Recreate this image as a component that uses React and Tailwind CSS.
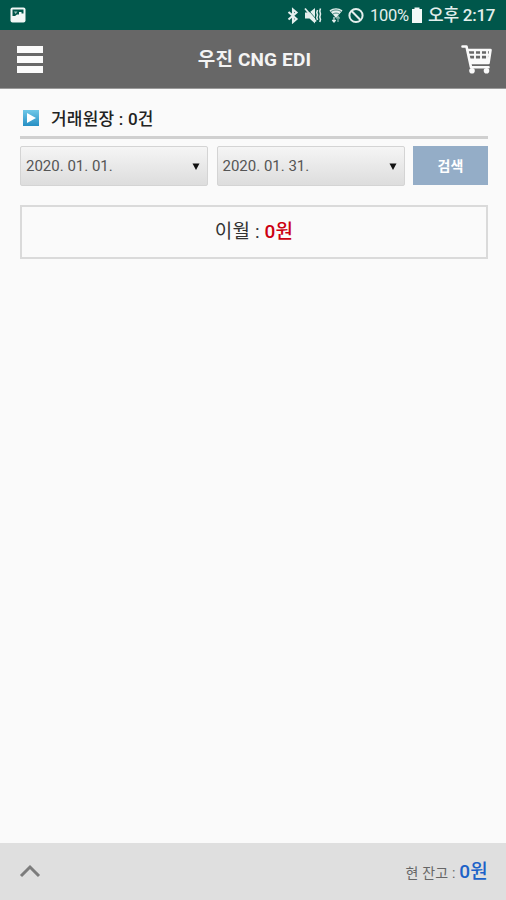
import React, { useState } from "react";

const StatusBar = () => {
  return (
    <div className="h-[30px] shrink-0 bg-[#00574b] flex items-center justify-between pl-[10px] pr-[10px] text-[#e4efed]">
      <svg className="w-4 h-4" viewBox="0 0 16 16">
        <rect x="0.5" y="0.5" width="15" height="15" rx="2" fill="#f2f8f7" />
        <path d="M2.500 2.500h11v4h-2V5H9v2.500H7L5 9H2.500z" fill="#00574b" />
        <path d="M4 4.500h3.500L5.500 7z" fill="#9cc2bb" />
      </svg>

      <div className="flex items-center">
        {/* bluetooth */}
        <svg className="w-3 h-[18px] mr-[5px]" viewBox="0 0 12 18">
          <path
            d="M1.500 6l8 7L6 16V3.500l3.500 3-8 7"
            fill="none"
            stroke="currentColor"
            strokeWidth="2.100"
          />
        </svg>
        {/* mute and vibrate */}
        <svg className="w-[18px] h-[18px] mr-[7px]" viewBox="0 0 18 18">
          <path d="M1 6.500h4.500l5.500-4.500v15.500L5.500 12.500H1z" fill="currentColor" />
          <path d="M3 2.500l9 10.500" stroke="#00574b" strokeWidth="0.800" />
          <path d="M1 2.500l11 13" stroke="currentColor" strokeWidth="1.800" />
          <path
            d="M13.500 4l-0.700 2.500 0.700 2.500-0.700 2.500 0.700 2.500M16.500 2.500l-0.700 2.500 0.700 3-0.700 3 0.700 2.500-0.700 2.500"
            fill="none"
            stroke="currentColor"
            strokeWidth="1.500"
          />
        </svg>
        {/* wifi */}
        <svg className="w-[14px] h-[18px] mr-[5px]" viewBox="0 0 14 18">
          <path d="M0.500 4.500C4.500 1.500 9.500 1.500 13.500 4.500L7 12z" fill="currentColor" />
          <path
            d="M2 5.500c3.300-2 6.700-2 10 0M4 8c2-1.300 4-1.300 6 0"
            fill="none"
            stroke="#00574b"
            strokeWidth="0.700"
          />
          <path
            d="M5 11v4.500M3.300 14l1.700 2 1.700-2"
            fill="none"
            stroke="currentColor"
            strokeWidth="1.200"
          />
          <path
            d="M9 16V11M7.300 12.500l1.700-2 1.700 2"
            fill="none"
            stroke="#8ab5ad"
            strokeWidth="1.200"
          />
        </svg>
        <svg className="w-4 h-[18px] mr-[6px]" viewBox="0 0 16 18">
          <circle
            cx="8"
            cy="9.500"
            r="6.600"
            fill="none"
            stroke="currentColor"
            strokeWidth="2"
          />
          <path d="M3.300 4.800l9.400 9.400" stroke="currentColor" strokeWidth="2" />
        </svg>
        <span className="w-[38px] pt-[2px] text-[17px] tracking-[-0.3px] whitespace-nowrap origin-left scale-x-[0.97]">
          100%
        </span>
        {/* battery */}
        <svg className="w-[10px] h-[16px] ml-1 mr-[6px]" viewBox="0 0 10 16">
          <path d="M2.500 0.500h5V2h2.500v14H0V2h2.500z" fill="#f2f8f7" />
        </svg>
        <span className="w-[68px] pt-[2px] text-[17px] font-medium tracking-[-0.25px] whitespace-nowrap">
          오후 2:17
        </span>
      </div>
    </div>
  );
};

const Header = () => {
  return (
    <header className="h-[59px] shrink-0 bg-[#676767] border-b border-[#9a9a9a] flex items-center justify-between pl-[17px] pr-[14px]">
      <button className="w-[31px] flex flex-col gap-[3px]" aria-label="menu">
        <span className="w-[26px] h-[7px] bg-[#fafafa]" />
        <span className="w-[26px] h-[7px] bg-[#fafafa]" />
        <span className="w-[26px] h-[7px] bg-[#fafafa]" />
      </button>
      <h1 className="pt-[2px] text-[19px] font-bold tracking-[0.15px] text-[#f4f4f4] whitespace-nowrap">
        우진 CNG EDI
      </h1>
      <svg className="w-[31px] h-[30px]" viewBox="0 0 31 30">
        <path
          d="M1.500 2.500h4L10 23.200h17.500M6.300 6H29.500L27.500 19H9"
          fill="none"
          stroke="#fafafa"
          strokeWidth="2.600"
          strokeLinejoin="round"
          strokeLinecap="round"
        />
        <path
          d="M7 10.800h21.500M8 15.500h20M14 5.500v10M20 5.500v10M26 5.500v10"
          stroke="#fafafa"
          strokeWidth="1.900"
        />
        <path d="M8.500 17.500h19" stroke="#fafafa" strokeWidth="3" />
        <circle cx="11" cy="26.700" r="2.800" fill="#fafafa" />
        <circle cx="25.500" cy="26.700" r="2.800" fill="#fafafa" />
      </svg>
    </header>
  );
};

const DateSelect = ({ value }) => {
  return (
    <button className="w-[188px] h-10 shrink-0 flex items-center justify-between pl-[5px] pr-[7px] rounded-[2px] border border-[#d4d4d4] bg-linear-to-b from-[#f5f5f5] to-[#dddddd] text-[#555555]">
      <span className="text-[15px] whitespace-nowrap">{value}</span>
      <svg className="w-2 h-[7px]" viewBox="0 0 8 7">
        <path d="M0.500 0.500h7L4 7z" fill="#111111" />
      </svg>
    </button>
  );
};

const App = () => {
  const [startDate] = useState("2020. 01. 01.");
  const [endDate] = useState("2020. 01. 31.");

  return (
    <div className="h-[900px] w-full flex flex-col bg-[#fafafa] font-[Roboto,'Noto_Sans_CJK_KR',sans-serif]">
      <StatusBar />
      <Header />

      <main className="flex-1 pl-[20px] pr-[18px] pt-[11px]">
        <div className="h-[39px] pl-[3px] flex items-center border-b-[3px] border-[#d0d0d0]">
          <svg className="w-4 h-4" viewBox="0 0 16 16">
            <defs>
              <linearGradient id="play" x1="0" y1="0" x2="0" y2="1">
                <stop offset="0" stopColor="#70c8e8" />
                <stop offset="1" stopColor="#268fc4" />
              </linearGradient>
            </defs>
            <rect width="16" height="16" fill="url(#play)" />
            <path d="M4 3l9 5-9 5z" fill="#ffffff" />
          </svg>
          <h2 className="ml-3 pt-[3px] text-[17px] font-medium tracking-[0.2px] text-[#222222] whitespace-nowrap">
            거래원장 : 0건
          </h2>
        </div>

        <div className="mt-[7px] flex justify-between">
          <DateSelect value={startDate} />
          <DateSelect value={endDate} />
          <button className="w-[75px] h-[39px] pt-px bg-[#94adc7] text-[14px] font-bold text-white">
            검색
          </button>
        </div>

        <div className="mt-[19px] h-[54px] flex items-center justify-center border-2 border-[#dadada] text-[19px] tracking-[0.15px] text-[#333333]">
          <p className="whitespace-nowrap">
            이월 : <span className="font-medium text-[#cc0011]">0원</span>
          </p>
        </div>
      </main>

      <footer className="h-[57px] shrink-0 bg-[#dfdfdf] flex items-center justify-between pl-[19px] pr-[18px]">
        <svg className="w-[22px] h-[14px] mb-[2px]" viewBox="0 0 22 14">
          <path
            d="M2 12l9-9 9 9"
            fill="none"
            stroke="#7c7c7c"
            strokeWidth="3"
          />
        </svg>
        <p className="pt-[2px] text-[14px] tracking-[0.2px] text-[#666666] whitespace-nowrap">
          현 잔고 :{" "}
          <span className="text-[19px] font-medium text-[#1c62c8]">0원</span>
        </p>
      </footer>
    </div>
  );
};

export default App;
